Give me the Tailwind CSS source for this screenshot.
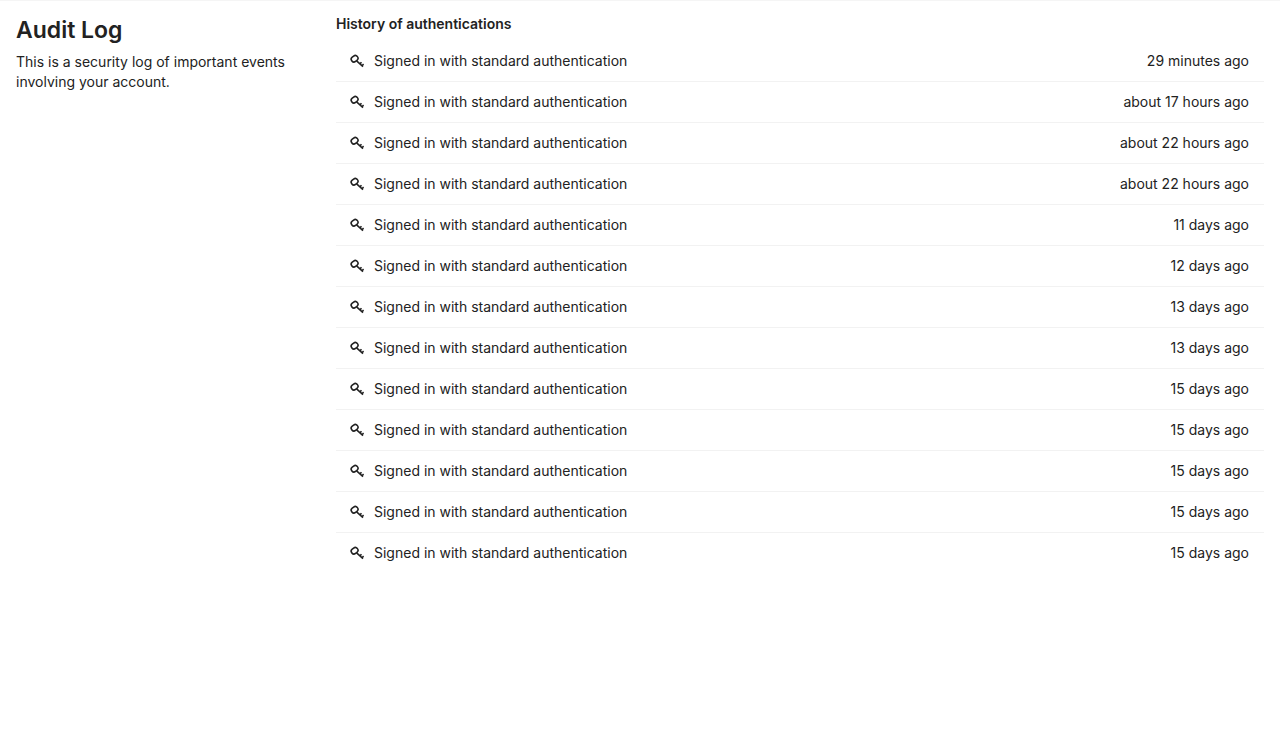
<!DOCTYPE html>
<html lang="en">
<head>
<meta charset="utf-8">
<meta name="viewport" content="width=device-width, initial-scale=1">
<title>Audit Log</title>
<script src="https://cdn.jsdelivr.net/npm/@tailwindcss/browser@4"></script>
</head>
<body class="min-h-screen bg-white font-['Inter',sans-serif] text-sm leading-5 text-[#222]">
<svg class="hidden" aria-hidden="true">
  <symbol id="key" viewBox="0 0 14 14">
    <rect x="1.1" y="2" width="7" height="5.4" rx="2.6" transform="rotate(-38 4.6 4.7)" fill="none" stroke="currentColor" stroke-width="1.6"/>
    <path d="M6.6 6.8l6.4 5.8M9.9 9.9l1.6-1.6M12 11.7l1.6-1.6" fill="none" stroke="currentColor" stroke-width="1.6"/>
  </symbol>
</svg>
<main class="grid grid-cols-1 border-t border-[#f5f5f5] md:grid-cols-4">
  <header class="px-4 pt-3">
    <h1 class="text-[23px] leading-[34px] font-semibold">Audit Log</h1>
    <p class="mt-[5px]">This is a security log of important events involving your account.</p>
  </header>
  <section class="px-4 pt-[13px] md:col-span-3" aria-labelledby="history">
    <h2 id="history" class="mb-[7px] font-semibold">History of authentications</h2>
    <ul id="events" class="divide-y divide-[#f2f2f2]"></ul>
  </section>
</main>
<template id="event">
  <li class="flex items-center py-2.5 pr-[15px] pl-3.5">
    <svg class="mr-2.5 size-3.5 shrink-0" aria-hidden="true"><use href="#key"/></svg>
    <span>Signed in with standard authentication</span>
    <time class="ml-auto pl-4 whitespace-nowrap"></time>
  </li>
</template>
<script>
  const times = ['29 minutes ago', 'about 17 hours ago', 'about 22 hours ago', 'about 22 hours ago', '11 days ago', '12 days ago', '13 days ago', '13 days ago', '15 days ago', '15 days ago', '15 days ago', '15 days ago', '15 days ago'];
  const list = document.getElementById('events');
  const row = document.getElementById('event');
  for (const time of times) {
    const item = row.content.cloneNode(true);
    item.querySelector('time').textContent = time;
    list.append(item);
  }
</script>
</body>
</html>
